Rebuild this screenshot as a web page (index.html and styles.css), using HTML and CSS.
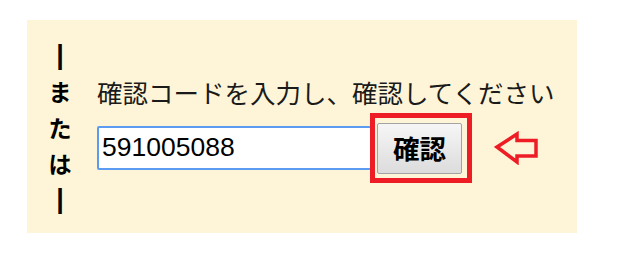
FILE: index.html
```html
<!DOCTYPE html>
<html lang="ja">
<head>
<meta charset="utf-8">
<link rel="stylesheet" href="styles.css">
</head>
<body>
<div class="panel">
  <div class="or">
    <span class="bar">|</span>
    <span>ま</span>
    <span>た</span>
    <span>は</span>
    <span class="bar">|</span>
  </div>
  <div class="main">
    <div class="label">確認コードを入力し、確認してください</div>
    <div class="row">
      <input class="code" type="text" value="591005088">
      <div class="frame"><button class="btn" type="button">確認</button></div>
      <svg class="arrow" width="46" height="34" viewBox="0 0 46 34">
        <polygon points="3,16 23,3 23,9.5 42,9.5 42,25 23,25 23,31" fill="none" stroke="#ee1c25" stroke-width="3.5" stroke-linejoin="miter"/>
      </svg>
    </div>
  </div>
</div>
</body>
</html>
```
FILE: styles.css
```css
html, body {
  margin: 0;
  padding: 0;
  background: #ffffff;
}
body {
  font-family: "Noto Sans CJK JP", "Liberation Sans", sans-serif;
}
.panel {
  margin: 20px 0 0 27px;
  width: 550px;
  height: 213px;
  background: #fef5d8;
  display: flex;
  align-items: center;
  box-sizing: border-box;
}
.or {
  display: flex;
  flex-direction: column;
  align-items: center;
  width: 24px;
  margin-left: 21px;
  font-size: 23px;
  font-weight: bold;
  line-height: 36px;
  color: #000;
}
.or span {
  display: block;
  height: 36px;
}
.or .bar {
  font-family: "Liberation Sans", Arial, sans-serif;
  font-size: 27px;
}
.main {
  margin-left: 25px;
  margin-top: 6px;
  display: flex;
  flex-direction: column;
}
.label {
  font-size: 25.5px;
  line-height: 30px;
  color: #1a1a1a;
  white-space: nowrap;
  margin-bottom: 6px;
}
.row {
  display: flex;
  align-items: center;
}
.code {
  box-sizing: border-box;
  width: 275px;
  height: 44px;
  margin: 0 -2px 0 0;
  border: 2px solid #5b9cf2;
  border-radius: 2px;
  padding: 0 0 0 3px;
  font-family: "Liberation Sans", Arial, sans-serif;
  font-size: 26.5px;
  color: #000;
  background: #fff;
  outline: none;
}
.frame {
  position: relative;
  border: 5px solid #ee1c25;
  padding: 5px 5px 4px 2px;
  background: #fef5d8;
  display: flex;
}
.btn {
  box-sizing: border-box;
  width: 85px;
  height: 51px;
  border: 1px solid #a3a3a3;
  border-radius: 2px;
  background: linear-gradient(#f6f6f6, #dcdcdc);
  font-family: "Noto Sans CJK JP", sans-serif;
  font-size: 26.5px;
  font-weight: bold;
  color: #000;
  padding: 0;
  line-height: 1;
}
.arrow {
  display: block;
  margin-left: 22px;
}
```
